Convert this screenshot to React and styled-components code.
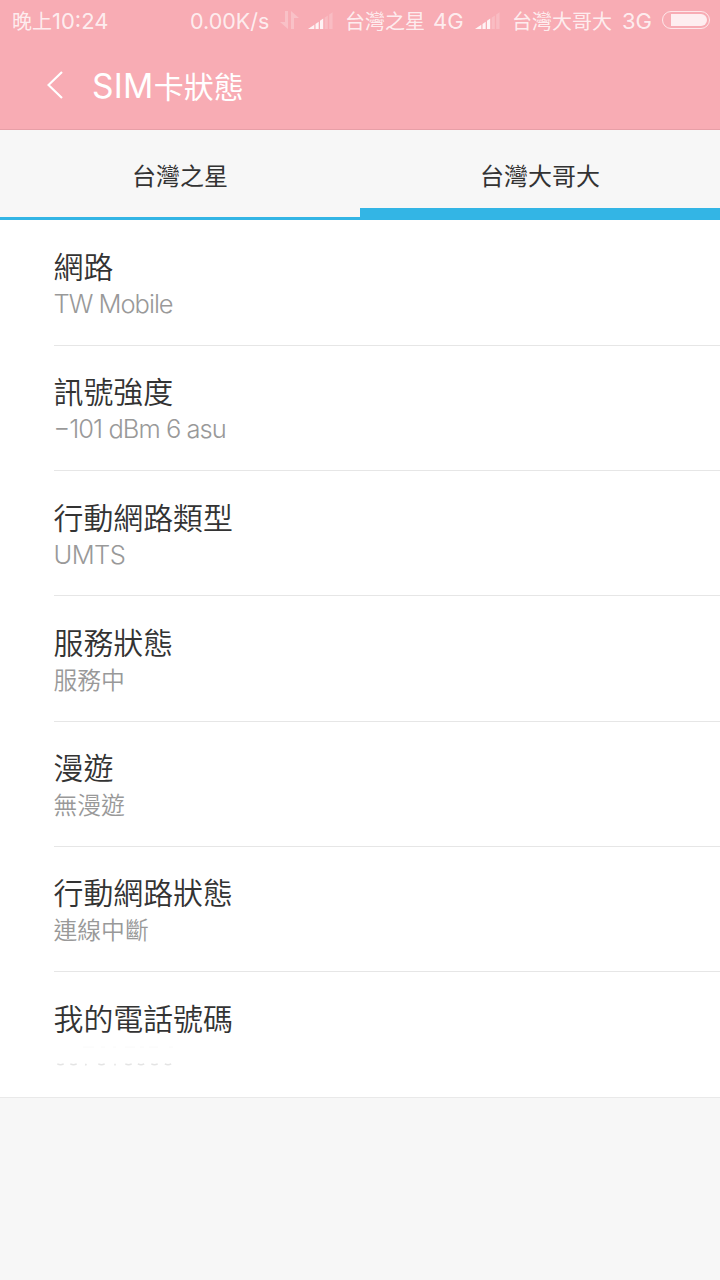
import React from 'react'
import styled, { createGlobalStyle } from 'styled-components'

const details = [
    { title: '網路', value: 'TW Mobile', latin: true, spacing: '-1px' },
    { title: '訊號強度', value: '−101 dBm 6 asu', latin: true, spacing: '-0.95px' },
    { title: '行動網路類型', value: 'UMTS', latin: true, spacing: '-0.6px' },
    { title: '服務狀態', value: '服務中' },
    { title: '漫遊', value: '無漫遊' },
    { title: '行動網路狀態', value: '連線中斷' },
    { title: '我的電話號碼', value: null },
]

function SignalIcon() {
    return (
        <svg width="25" height="17" viewBox="0 0 25 17" fill="#fff">
            <path d="M0 17 L6.3 12.7 V17Z" opacity=".85" />
            <path d="M7.5 11.9 L10.7 9.7 V17 H7.5Z M12 8.8 L15.2 6.6 V17 H12Z" opacity=".85" />
            <path d="M16.6 5.7 L19.8 3.5 V17 H16.6Z M21.2 2.6 L24.6 0.3 V17 H21.2Z" opacity=".2" />
        </svg>
    )
}

// faint leftovers of the hidden phone number
function HiddenNumber() {
    const curves = [6.5, 19.5, 47.5, 74.5, 87, 100.5, 114]
    return (
        <svg width="140" height="36" viewBox="0 0 140 36" fill="none" stroke="#e4e4e4" strokeWidth="1.5">
            {curves.map((x) => <path key={x} d={`M${x - 3.2} 28.8 Q${x} 30.6 ${x + 3.2} 28.8`} />)}
            <path d="M31.5 30.5 L32.2 28.8 M61 28.8 V30.5" />
            <path d="M29 12 H40 M47 12 H51 M59 12 H62 M71 12 H81 M86 12 H90 M95 12 H104 M115 12 H119" stroke="#fafafa" strokeWidth="1" />
        </svg>
    )
}

function App() {
    return (
        <>
            <GlobalStyle />
            <Page>
                <Header>
                    <StatusBar>
                        <StatusText $width="178px">晚上<Latin $size="22px">10:24</Latin></StatusText>
                        <StatusText $width="90px"><Latin $size="21.5px">0.00K/s</Latin></StatusText>
                        <StatusIcon $width="28px">
                            <svg width="19" height="18" viewBox="0 0 19 18" fill="#fff" opacity=".25">
                                <path d="M5 0 H8 V18 L0 11 H5Z M11 0 L19 7 H14 V18 H11Z" />
                            </svg>
                        </StatusIcon>
                        <StatusIcon $width="37px"><SignalIcon /></StatusIcon>
                        <StatusText $width="88px">台灣之星</StatusText>
                        <StatusText $width="42px"><Latin $size="22px">4G</Latin></StatusText>
                        <StatusIcon $width="37px"><SignalIcon /></StatusIcon>
                        <StatusText $width="110px">台灣大哥大</StatusText>
                        <StatusText $width="40px"><Latin $size="22px">3G</Latin></StatusText>
                        <Battery><BatteryLevel /></Battery>
                    </StatusBar>
                    <TitleBar>
                        <svg width="16" height="28" viewBox="0 0 16 28" fill="none" stroke="#fff" strokeWidth="2.2">
                            <path d="M15 1 L1.5 14 L15 27" />
                        </svg>
                        <Title><Latin $size="33.5px" $spacing="0.3px">SIM</Latin>卡狀態</Title>
                    </TitleBar>
                </Header>
                <Tabs>
                    <Tab>台灣之星</Tab>
                    <Tab $active>台灣大哥大</Tab>
                </Tabs>
                <List>
                    {details.map((item) => (
                        <Row key={item.title}>
                            <RowTitle>{item.title}</RowTitle>
                            <RowValue>
                                {item.value === null ? <HiddenNumber /> : item.latin
                                    ? <Latin $size="25.5px" $weight="300" $spacing={item.spacing}>{item.value}</Latin>
                                    : item.value}
                            </RowValue>
                        </Row>
                    ))}
                </List>
            </Page>
        </>
    )
}

export default App

const GlobalStyle = createGlobalStyle`
* {
    box-sizing: border-box;
}
body {
    margin: 0;
    background: #f7f7f7;
}
svg {
    display: block;
}
`

const Page = styled.div`
    width: 720px;
    height: 1280px;
    overflow: hidden;
    background: #f7f7f7;
    font-family: "Noto Sans CJK TC", sans-serif;
`

const Header = styled.header`
    height: 130px;
    background: #f8acb4;
    border-bottom: 1px solid #e79fa7;
`

const StatusBar = styled.div`
    display: flex;
    height: 40px;
    padding-left: 12px;
    color: rgba(255, 255, 255, .8);
    font-size: 20px;
    line-height: 42px;
`

const StatusText = styled.span`
    flex: 0 0 ${({ $width }) => $width};
    white-space: nowrap;
`

const StatusIcon = styled.span`
    display: flex;
    flex: 0 0 ${({ $width }) => $width};
    height: 29px;
    align-items: flex-end;
`

const Latin = styled.span`
    font-family: Inter, sans-serif;
    font-size: ${({ $size }) => $size};
    font-weight: ${({ $weight }) => $weight || 400};
    font-feature-settings: "case";
    letter-spacing: ${({ $spacing }) => $spacing || 'normal'};
    line-height: 1;
`

const Battery = styled.span`
    width: 48px;
    height: 18px;
    margin-top: 11px;
    padding: 2px 2px 2px 8px;
    border: 1px solid rgba(255, 255, 255, .7);
    border-radius: 9px;
`

const BatteryLevel = styled.span`
    display: block;
    height: 12px;
    border-radius: 0 6px 6px 0;
    background: rgba(255, 255, 255, .8);
`

const TitleBar = styled.div`
    display: flex;
    height: 90px;
    align-items: center;
    gap: 29px;
    padding-left: 47px;
`

const Title = styled.h1`
    margin: 0;
    color: #fff;
    font-size: 30px;
    font-weight: 400;
    line-height: 88px;
`

const Tabs = styled.nav`
    display: flex;
    height: 90px;
`

const Tab = styled.div`
    flex: 1;
    border-bottom: ${({ $active }) => $active ? '12px' : '3px'} solid #33b5e5;
    color: #333;
    font-size: 24px;
    font-weight: 400;
    line-height: 90px;
    text-align: center;
`

const List = styled.div`
    padding: .5px 0 0 53.5px;
    background: #fff;
    border-bottom: 1px solid #e9e9e9;
`

const Row = styled.div`
    height: 125.25px;
    padding-top: 26.5px;
    border-bottom: 1px solid #e6e6e6;
    &:last-child {
        height: 124.5px;
        border-bottom: none;
    }
`

const RowTitle = styled.div`
    color: #333;
    font-size: 29.9px;
    font-weight: 350;
    line-height: 36px;
`

const RowValue = styled.div`
    height: 36px;
    color: #999;
    font-size: 23.8px;
    font-weight: 350;
    line-height: 39px;
`
